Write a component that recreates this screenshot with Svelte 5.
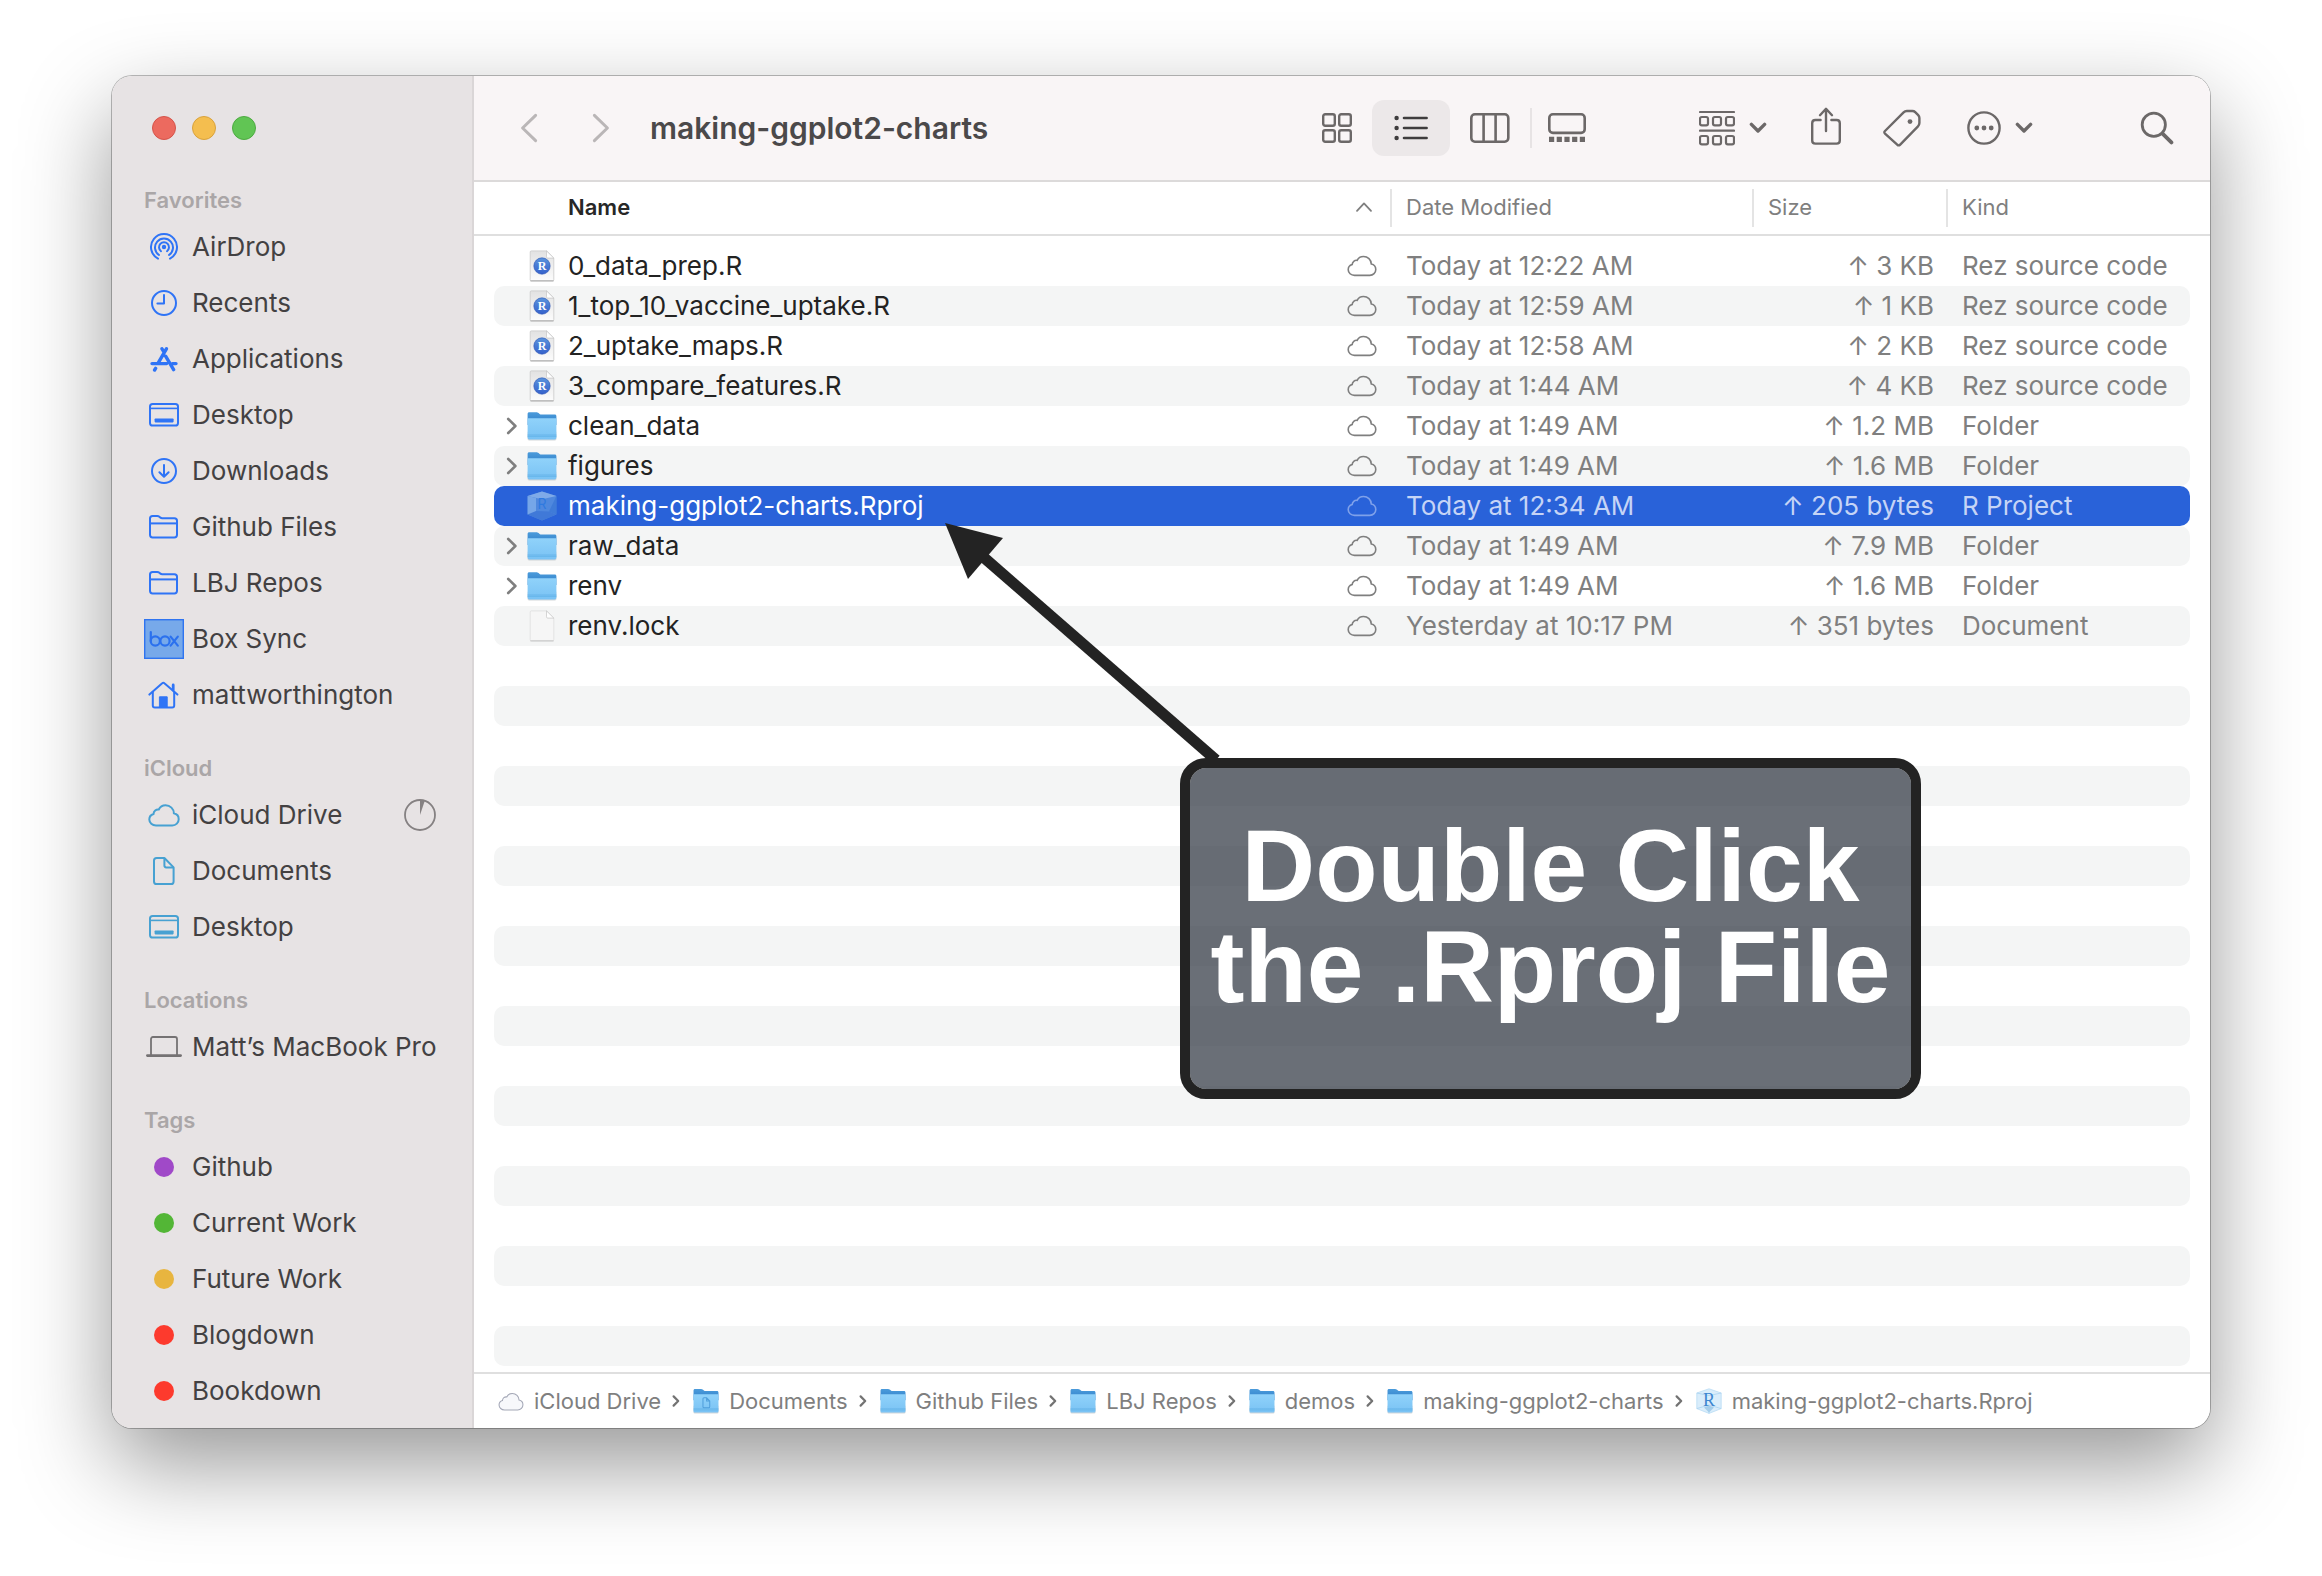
<script>
  const favorites = [
    { icon: 'airdrop', label: 'AirDrop' },
    { icon: 'clock', label: 'Recents' },
    { icon: 'apps', label: 'Applications' },
    { icon: 'desktop', label: 'Desktop' },
    { icon: 'download', label: 'Downloads' },
    { icon: 'folder', label: 'Github Files' },
    { icon: 'folder', label: 'LBJ Repos' },
    { icon: 'box', label: 'Box Sync' },
    { icon: 'home', label: 'mattworthington' }
  ];
  const icloud = [
    { icon: 'cloud', label: 'iCloud Drive', progress: true },
    { icon: 'document', label: 'Documents' },
    { icon: 'desktop', label: 'Desktop' }
  ];
  const locations = [{ icon: 'laptop', label: 'Matt’s MacBook Pro' }];
  const tags = [
    { icon: 'dot', tone: 'purple', label: 'Github' },
    { icon: 'dot', tone: 'green', label: 'Current Work' },
    { icon: 'dot', tone: 'yellow', label: 'Future Work' },
    { icon: 'dot', tone: 'red', label: 'Blogdown' },
    { icon: 'dot', tone: 'red', label: 'Bookdown' }
  ];
  const sections = [
    { title: 'Favorites', tone: 'blue', items: favorites },
    { title: 'iCloud', tone: 'cyan', items: icloud },
    { title: 'Locations', tone: 'gray', items: locations },
    { title: 'Tags', tone: 'gray', items: tags }
  ];

  const files = [
    { icon: 'rfile', name: '0_data_prep.R', date: 'Today at 12:22 AM', size: '3 KB', kind: 'Rez source code' },
    { icon: 'rfile', name: '1_top_10_vaccine_uptake.R', date: 'Today at 12:59 AM', size: '1 KB', kind: 'Rez source code' },
    { icon: 'rfile', name: '2_uptake_maps.R', date: 'Today at 12:58 AM', size: '2 KB', kind: 'Rez source code' },
    { icon: 'rfile', name: '3_compare_features.R', date: 'Today at 1:44 AM', size: '4 KB', kind: 'Rez source code' },
    { icon: 'folder', name: 'clean_data', date: 'Today at 1:49 AM', size: '1.2 MB', kind: 'Folder' },
    { icon: 'folder', name: 'figures', date: 'Today at 1:49 AM', size: '1.6 MB', kind: 'Folder' },
    { icon: 'cube', name: 'making-ggplot2-charts.Rproj', date: 'Today at 12:34 AM', size: '205 bytes', kind: 'R Project', selected: true },
    { icon: 'folder', name: 'raw_data', date: 'Today at 1:49 AM', size: '7.9 MB', kind: 'Folder' },
    { icon: 'folder', name: 'renv', date: 'Today at 1:49 AM', size: '1.6 MB', kind: 'Folder' },
    { icon: 'blank', name: 'renv.lock', date: 'Yesterday at 10:17 PM', size: '351 bytes', kind: 'Document' }
  ];
  const emptyRows = Array.from({ length: 18 }, (_, i) => i);

  const path = [
    { icon: 'cloudfill', label: 'iCloud Drive' },
    { icon: 'docfolder', label: 'Documents' },
    { icon: 'folder', label: 'Github Files' },
    { icon: 'folder', label: 'LBJ Repos' },
    { icon: 'folder', label: 'demos' },
    { icon: 'folder', label: 'making-ggplot2-charts' },
    { icon: 'cubelight', label: 'making-ggplot2-charts.Rproj' }
  ];

  const cloudPath =
    'M8 21.5C4.3 21.5 1.3 18.9 1.3 15.6c0-2.7 1.7-4.9 4.2-5.6.2-3 2.6-4.9 5.3-4.5C12 2.9 14.6 1.3 17.6 1.3c4.6 0 8.2 3.5 8.3 8 2.8.6 4.8 3 4.8 5.9 0 3.5-2.8 6.3-6.4 6.3z';
</script>

{#snippet sideIcon(name, tone)}
  {#if name === 'airdrop'}
    <svg width="30" height="30" viewBox="0 0 30 30" fill="none" stroke="currentColor" stroke-width="2" stroke-linecap="round" aria-hidden="true">
      <circle cx="15" cy="15" r="2.2" fill="currentColor" stroke="none" />
      <path d="M12 19.2a5 5 0 1 1 6 0" />
      <path d="M10 23a9 9 0 1 1 10 0" />
      <path d="M9 26.6a13 13 0 1 1 12 0" />
    </svg>
  {:else if name === 'clock'}
    <svg width="28" height="28" viewBox="0 0 28 28" fill="none" stroke="currentColor" stroke-width="2" stroke-linecap="round" stroke-linejoin="round" aria-hidden="true">
      <circle cx="14" cy="14" r="12" /><path d="M14 6v8.6H7.4" />
    </svg>
  {:else if name === 'apps'}
    <svg width="28" height="26" viewBox="0 0 28 26" fill="none" stroke="currentColor" stroke-width="3.4" stroke-linecap="round" aria-hidden="true">
      <path d="M12 2.8l1.6 2.6M16.4 2.8L8.4 16.6M2 17.6h14.6M22.4 17.6h3.6M5.6 22.4l-1 1.6M15.6 10.2l8 13.4" />
    </svg>
  {:else if name === 'desktop'}
    <svg width="30" height="24" viewBox="0 0 30 24" fill="none" stroke="currentColor" stroke-width="2" aria-hidden="true">
      <rect x="1" y="1" width="28" height="21.5" rx="2.6" /><path d="M1 5.4h28" stroke-width="1.6" />
      <rect x="5.6" y="15.4" width="19" height="4" rx="0.8" fill="currentColor" stroke="none" />
    </svg>
  {:else if name === 'download'}
    <svg width="28" height="28" viewBox="0 0 28 28" fill="none" stroke="currentColor" stroke-width="2" stroke-linecap="round" stroke-linejoin="round" aria-hidden="true">
      <circle cx="14" cy="14" r="12" /><path d="M14 8v11.6M9.4 15.2L14 19.8l4.6-4.6" />
    </svg>
  {:else if name === 'folder'}
    <svg width="30" height="24" viewBox="0 0 30 24" fill="none" stroke="currentColor" stroke-width="2" stroke-linejoin="round" aria-hidden="true">
      <path d="M1 19.8V3.6C1 2 2 1 3.600 1H8.200c.9 0 1.500.2 2.200.8l1 .8c.5.400 1 .6 1.800.6h12.200c1.600 0 2.600 1 2.600 2.600v14c0 1.600-1 2.600-2.600 2.600H3.600C2 22.400 1 21.400 1 19.800z" />
      <path d="M1 8.400h27" />
    </svg>
  {:else if name === 'box'}
    <svg width="40" height="40" viewBox="0 0 40 40" aria-hidden="true">
      <rect x="0.7" y="0.7" width="38.600" height="38.600" fill="#77a9ea" stroke="#2f74f0" stroke-width="1.400" />
      <g fill="none" stroke="#2b71ee" stroke-width="2.200" stroke-linecap="round">
        <path d="M6.800 13v9" /><circle cx="11.300" cy="22" r="4.600" /><circle cx="21" cy="22" r="4.600" />
        <path d="M26.600 17.600l7.200 9M33.800 17.600l-7.200 9" />
      </g>
    </svg>
  {:else if name === 'home'}
    <svg width="32" height="28" viewBox="0 0 32 28" fill="none" stroke="currentColor" stroke-width="2" stroke-linecap="round" stroke-linejoin="round" aria-hidden="true">
      <path d="M1.400 13.600L14.200 2.200a1.600 1.600 0 0 1 2.200 0L29.400 13.600" /><path d="M4.800 11v13.400c0 1.200.8 2 2 2h17.400c1.200 0 2-.8 2-2V11" />
      <path d="M25.200 4v5" stroke-width="2.800" /><path d="M11.800 15.800h7.400v10.400h-7.400z" fill="currentColor" stroke-width="1" />
    </svg>
  {:else if name === 'cloud'}
    <svg width="32" height="23" viewBox="0 0 32 23" fill="none" stroke="currentColor" stroke-width="2" aria-hidden="true"><path d={cloudPath} /></svg>
  {:else if name === 'document'}
    <svg width="22" height="28" viewBox="0 0 22 28" fill="none" stroke="currentColor" stroke-width="2" stroke-linejoin="round" aria-hidden="true">
      <path d="M1 24.400V3.600C1 2 2 1 3.600 1H11.400L20.600 10.400v14c0 1.600-1 2.600-2.600 2.600H3.600C2 27 1 26 1 24.400z" /><path d="M11.400 1v7.600c0 1.200.6 1.800 1.800 1.800h7.400" />
    </svg>
  {:else if name === 'laptop'}
    <svg width="36" height="22" viewBox="0 0 36 22" fill="none" stroke="currentColor" stroke-width="2" stroke-linecap="round" aria-hidden="true">
      <path d="M5 19V3c0-1.200.8-2 2-2h22c1.200 0 2 .8 2 2v16" stroke-width="1.800" /><path d="M1.400 19.600h33.200" stroke-width="2.800" />
    </svg>
  {:else}
    <span class="dot {tone}"></span>
  {/if}
{/snippet}

{#snippet fileIcon(name)}
  {#if name === 'folder' || name === 'docfolder'}
    <svg viewBox="0 0 30 30" aria-hidden="true">
      <defs>
        <linearGradient id="folder-face" x1="0" y1="0" x2="0" y2="1"><stop offset="0" stop-color="#90d2fa" /><stop offset="1" stop-color="#79c2f4" /></linearGradient>
        <linearGradient id="folder-back" x1="0" y1="0" x2="0" y2="1"><stop offset="0" stop-color="#4b9bdb" /><stop offset="1" stop-color="#2f7fc9" /></linearGradient>
      </defs>
      <rect x="0.600" y="20" width="28.800" height="9.400" rx="1.400" fill="#b9bec2" opacity="0.6" />
      <path d="M.6 3c0-1.200.6-1.800 1.800-1.800h6.800c1 0 1.600.2 2.400.9l1 .8c.6.500 1 .7 2 .7h13c1.200 0 1.800.6 1.800 1.800V14H.6z" fill="url(#folder-back)" />
      <path d="M.6 7.200h28.800v19.400c0 1.200-.6 1.800-1.800 1.800H2.400c-1.200 0-1.800-.6-1.800-1.800z" fill="url(#folder-face)" />
      <path d="M.6 24h28.800M.6 25.400h28.800" stroke="#5fb0e6" stroke-width="0.700" />
      {#if name === 'docfolder'}
        <path d="M11.500 21.500v-9c0-.8.4-1.200 1.200-1.200h3l3.600 3.600v6.600c0 .8-.4 1.200-1.200 1.200h-5.400c-.8 0-1.200-.4-1.200-1.200zM15.700 11.300v3.600h3.600" fill="none" stroke="#4f9fdc" stroke-width="1.200" />
      {/if}
    </svg>
  {:else if name === 'rfile' || name === 'blank'}
    <svg viewBox="0 0 30 32" aria-hidden="true">
      <defs>
        <linearGradient id="page-face" x1="0" y1="0" x2="0" y2="1"><stop offset="0" stop-color="#e2e2e2" /><stop offset="1" stop-color="#fcfcfc" /></linearGradient>
        <linearGradient id="r-ball" x1="0" y1="0" x2="0" y2="1"><stop offset="0" stop-color="#5a94dd" /><stop offset="1" stop-color="#3561cb" /></linearGradient>
      </defs>
      <path d="M3.200 29V2c0-.7.400-1.100 1.100-1.100h15.200l7.300 7.200V29.800c0 .7-.4 1.100-1.100 1.100H4.300c-.7 0-1.100-.4-1.100-1.100z" fill={name === 'rfile' ? 'url(#page-face)' : '#f6f6f6'} stroke={name === 'rfile' ? '#c9c9c9' : '#dedede'} stroke-width="0.800" />
      <path d="M3.400 30.900h23.200" stroke={name === 'rfile' ? '#a9a9a9' : '#c4c4c4'} stroke-width="1" />
      <path d="M19.500.9v5.900c0 .9.400 1.300 1.300 1.300h6z" fill="#fff" stroke="#c4c4c4" stroke-width="0.700" />
      {#if name === 'rfile'}
        <circle cx="15" cy="16" r="8.200" fill="url(#r-ball)" stroke="#2c54b4" stroke-width="0.600" />
        <text x="15" y="20" class="ball-letter">R</text>
      {/if}
    </svg>
  {:else if name === 'cube'}
    <svg viewBox="0 0 30 30" aria-hidden="true">
      <path d="M15 0.600L29.400 5v18.600L15 29.600.6 23.600V5z" fill="#4f88de" />
      <path d="M15 .6L29.400 5 15 8.200.6 5z" fill="#7faae8" />
      <path d="M.6 5L9 7v16L.6 23.600z" fill="#76a6e8" />
      <path d="M29.400 5v18.600L22 20.400z" fill="#3f7bd8" />
      <path d="M.6 23.600L9 20l13 .4 7.400 3.200L15 29.600z" fill="#4079d8" />
      <text x="15" y="18" class="cube-letter">R</text>
    </svg>
  {:else if name === 'cubelight'}
    <svg viewBox="0 0 26 26" aria-hidden="true">
      <path d="M13 .8L25.200 5v15.600L13 25.400.8 20.600V5z" fill="#d9edfb" stroke="#b9dcf4" stroke-width="0.800" />
      <path d="M.8 5L13 7.600 25.200 5M.8 20.600L13 17l12.200 3.600M13 17v8.400" fill="none" stroke="#a9d3f1" stroke-width="0.800" />
      <path d="M8 19.400l5 5 5-5-5-1.800z" fill="#a4cdea" />
      <text x="13" y="17.500" class="light-letter">R</text>
    </svg>
  {:else}
    <svg viewBox="0 0 32 28" aria-hidden="true">
      <g transform="translate(0 3)"><path d={cloudPath} fill="#f7f8fb" stroke="#a3a7b6" stroke-width="1.300" /></g>
    </svg>
  {/if}
{/snippet}

{#snippet smallChevron()}
  <svg width="18" height="12" viewBox="0 0 18 12" fill="none" stroke="currentColor" stroke-width="3.400" stroke-linecap="round" stroke-linejoin="round" aria-hidden="true"><path d="M2.400 2.400L9 9l6.600-6.600" /></svg>
{/snippet}

<div class="page">
  <div class="window">
    <aside class="sidebar">
      <div class="lights">
        <button class="light close" aria-label="Close"></button>
        <button class="light minimize" aria-label="Minimize"></button>
        <button class="light zoom" aria-label="Zoom"></button>
      </div>
      <nav aria-label="Sidebar">
        {#each sections as section}
          <h2>{section.title}</h2>
          <ul class={section.tone}>
            {#each section.items as item}
              <li>
                <a href="#top">
                  <span class="side-icon">{@render sideIcon(item.icon, item.tone)}</span>
                  <span>{item.label}</span>
                  {#if item.progress}
                    <svg class="progress" width="32" height="32" viewBox="0 0 32 32" aria-hidden="true">
                      <circle cx="16" cy="16" r="15" fill="none" stroke="#858182" stroke-width="1.800" />
                      <path d="M16 16V1a15 15 0 0 1 4.800.8z" fill="#858182" />
                    </svg>
                  {/if}
                </a>
              </li>
            {/each}
          </ul>
        {/each}
      </nav>
    </aside>

    <main>
      <header class="toolbar">
        <div class="history">
          <button aria-label="Back"><svg width="18" height="30" viewBox="0 0 18 30" aria-hidden="true"><path d="M15.600 2.400L2.600 15l13 12.600" /></svg></button>
          <button aria-label="Forward"><svg width="18" height="30" viewBox="0 0 18 30" aria-hidden="true"><path d="M2.400 2.400L15.400 15l-13 12.600" /></svg></button>
        </div>
        <h1>making-ggplot2-charts</h1>
        <div class="views">
          <button class="icons" aria-label="Icon view">
            <svg width="30" height="30" viewBox="0 0 30 30" fill="none" stroke="currentColor" stroke-width="2.400" aria-hidden="true">
              <rect x="1.200" y="1.200" width="11.600" height="11.600" rx="2" /><rect x="17.200" y="1.200" width="11.600" height="11.600" rx="2" />
              <rect x="1.200" y="17.200" width="11.600" height="11.600" rx="2" /><rect x="17.200" y="17.200" width="11.600" height="11.600" rx="2" />
            </svg>
          </button>
          <button class="list" aria-label="List view" aria-pressed="true">
            <svg width="34" height="26" viewBox="0 0 34 26" fill="none" stroke="currentColor" stroke-width="2.600" stroke-linecap="round" aria-hidden="true">
              <path d="M10 3h22.600M10 13h22.600M10 23h22.600" />
              <g fill="currentColor" stroke="none"><circle cx="2.600" cy="3" r="2.200" /><circle cx="2.600" cy="13" r="2.200" /><circle cx="2.600" cy="23" r="2.200" /></g>
            </svg>
          </button>
          <button class="columns" aria-label="Column view">
            <svg width="40" height="30" viewBox="0 0 40 30" fill="none" stroke="currentColor" stroke-width="2.600" aria-hidden="true">
              <rect x="1.300" y="1.300" width="37" height="27.400" rx="3.600" /><path d="M13.600 1.200v27.600M25.600 1.200v27.600" />
            </svg>
          </button>
          <span class="divider"></span>
          <button class="gallery" aria-label="Gallery view">
            <svg width="38" height="30" viewBox="0 0 38 30" fill="none" stroke="currentColor" stroke-width="2.600" aria-hidden="true">
              <rect x="1.300" y="1.300" width="35.400" height="18.600" rx="3.600" />
              <path d="M1 26.400h36" stroke-width="5.200" stroke-dasharray="5.200 2.500" />
            </svg>
          </button>
        </div>
        <div class="actions">
          <button class="group" aria-label="Group items">
            <svg width="36" height="36" viewBox="0 0 36 36" fill="none" stroke="currentColor" stroke-width="2.200" stroke-linecap="round" aria-hidden="true">
              <path d="M1 2h34M1 20.600h34" />
              <rect x="1" y="7" width="8" height="8.400" rx="1.800" /><rect x="14" y="7" width="8" height="8.400" rx="1.800" /><rect x="27" y="7" width="8" height="8.400" rx="1.800" />
              <rect x="1" y="26" width="8" height="8.400" rx="1.800" /><rect x="14" y="26" width="8" height="8.400" rx="1.800" /><rect x="27" y="26" width="8" height="8.400" rx="1.800" />
            </svg>
            {@render smallChevron()}
          </button>
          <button class="single" aria-label="Share">
            <svg width="30" height="42" viewBox="0 0 30 42" fill="none" stroke="currentColor" stroke-width="2.400" stroke-linecap="round" stroke-linejoin="round" aria-hidden="true">
              <path d="M9.600 13H4.400c-2 0-3.200 1.200-3.200 3.200v17.200c0 2 1.200 3.200 3.200 3.200h21.200c2 0 3.200-1.200 3.200-3.200V16.200c0-2-1.200-3.200-3.200-3.200h-5.200" />
              <path d="M15 24V2.200M9 8.200l6-6.400 6 6.400" />
            </svg>
          </button>
          <button class="single" aria-label="Edit tags">
            <svg width="38" height="38" viewBox="0 0 38 38" fill="none" stroke="currentColor" stroke-width="2.400" stroke-linejoin="round" aria-hidden="true">
              <path d="M2 22L20.600 3.400c1-1 1.800-1.400 3.200-1.400h5.600c1.200 0 2 .3 2.800 1.100l3 3c.8.8 1.200 1.600 1.200 2.800v5.200c0 1.400-.4 2.200-1.400 3.200L17.200 35.600c-1 1-2 1-3 0L2 24.600c-.9-.9-.9-1.700 0-2.600z" />
              <circle cx="27" cy="12.600" r="2.400" fill="currentColor" stroke="none" />
            </svg>
          </button>
          <button class="more" aria-label="More actions">
            <svg width="34" height="34" viewBox="0 0 34 34" fill="none" stroke="currentColor" stroke-width="2.400" aria-hidden="true">
              <circle cx="17" cy="17" r="15.600" />
              <g fill="currentColor" stroke="none"><circle cx="9.800" cy="17" r="2.400" /><circle cx="17" cy="17" r="2.400" /><circle cx="24.200" cy="17" r="2.400" /></g>
            </svg>
            {@render smallChevron()}
          </button>
        </div>
        <button class="search" aria-label="Search">
          <svg width="34" height="34" viewBox="0 0 34 34" fill="none" stroke="currentColor" stroke-width="2.800" stroke-linecap="round" aria-hidden="true">
            <circle cx="13.800" cy="13.800" r="11.600" /><path d="M22.800 22.800l8.600 8.600" stroke-width="3.800" />
          </svg>
        </button>
      </header>

      <table>
        <colgroup><col class="c-edge" /><col class="c-name" /><col class="c-date" /><col class="c-size" /><col class="c-kind" /><col class="c-edge" /></colgroup>
        <thead>
          <tr>
            <th class="name" scope="col" aria-sort="ascending">
              <button>Name
                <svg width="18" height="12" viewBox="0 0 18 12" fill="none" stroke="#7f7f7f" stroke-width="1.800" stroke-linecap="round" stroke-linejoin="round" aria-hidden="true"><path d="M2 9.800L9 2.400l7 7.400" /></svg>
              </button>
            </th>
            <th scope="col"><button>Date Modified</button></th>
            <th scope="col"><button>Size</button></th>
            <th scope="col"><button>Kind</button></th>
          </tr>
        </thead>
        <tbody>
          {#each files as file}
            <tr class:selected={file.selected}>
              <td class="name">
                <div class="file">
                  {#if file.icon === 'folder'}
                    <button class="disclose" aria-label={'Expand ' + file.name}>
                      <svg width="12" height="18" viewBox="0 0 12 18" fill="none" stroke="#7f7f7f" stroke-width="2.600" stroke-linecap="round" stroke-linejoin="round" aria-hidden="true"><path d="M2.200 2L9.400 9l-7.200 7" /></svg>
                    </button>
                  {:else}
                    <span class="disclose"></span>
                  {/if}
                  <span class="file-icon">{@render fileIcon(file.icon)}</span>
                  <span class="file-name">{file.name}</span>
                  <svg class="cloud" width="30" height="22" viewBox="0 0 32 23" fill="none" stroke="currentColor" stroke-width="1.700" aria-hidden="true"><path d={cloudPath} /></svg>
                </div>
              </td>
              <td>{file.date}</td>
              <td class="size">↑ {file.size}</td>
              <td>{file.kind}</td>
            </tr>
          {/each}
          {#each emptyRows as row (row)}
            <tr><td></td><td></td><td></td><td></td></tr>
          {/each}
        </tbody>
      </table>

      <footer class="pathbar">
        {#each path as step, i}
          {#if i > 0}
            <svg class="sep" width="8" height="14" viewBox="0 0 8 14" fill="none" stroke="#737373" stroke-width="2.200" stroke-linecap="round" stroke-linejoin="round" aria-hidden="true"><path d="M1.600 2.400L6.200 7l-4.600 4.600" /></svg>
          {/if}
          <a href="#top"><span class="step-icon">{@render fileIcon(step.icon)}</span>{step.label}</a>
        {/each}
      </footer>

      <svg class="arrow" width="290" height="250" viewBox="0 0 290 250" aria-hidden="true">
        <path d="M36 32L271 237" stroke="#232323" stroke-width="11" />
        <path d="M0 0L58 15 23 56z" fill="#232323" />
      </svg>
      <div class="callout">Double Click<br />the .Rproj File</div>
    </main>
  </div>
</div>

<style>
  :global(body) {
    background: #fff;
  }
  .page {
    padding: 76px 112px 148px;
    font-family: Inter, 'Liberation Sans', sans-serif;
    font-size: 26px;
    line-height: 40px;
    color: #232323;
  }
  .window {
    display: flex;
    border-radius: 20px;
    box-shadow:
      0 0 0 1px rgba(0, 0, 0, 0.26),
      0 36px 90px rgba(0, 0, 0, 0.41);
  }
  button {
    display: flex;
    align-items: center;
    padding: 0;
    border: 0;
    background: none;
    font: inherit;
    color: inherit;
  }
  a {
    color: inherit;
    text-decoration: none;
  }
  svg {
    display: block;
    flex: none;
  }

  .sidebar {
    box-sizing: border-box;
    flex: none;
    width: 362px;
    padding: 40px 28px 9px 32px;
    border-right: 2px solid #dad6d7;
    border-radius: 20px 0 0 20px;
    background: #e7e3e4;
    color: #434142;
  }
  .lights {
    display: flex;
    gap: 16px;
    padding: 0 8px 15px;
  }
  .light {
    width: 24px;
    height: 24px;
    border: 1px solid;
    border-radius: 50%;
  }
  .close {
    border-color: #d5544a;
    background: #ec6a5f;
  }
  .minimize {
    border-color: #d9a23c;
    background: #f4be4f;
  }
  .zoom {
    border-color: #4dab41;
    background: #61c554;
  }
  h2 {
    margin: 0;
    padding: 28px 0 2px;
    font-size: 22px;
    font-weight: 600;
    line-height: 34px;
    color: #aaa6a7;
  }
  ul {
    margin: 0;
    padding: 0;
    list-style: none;
  }
  li a {
    display: flex;
    align-items: center;
    gap: 8px;
    height: 56px;
    white-space: nowrap;
  }
  .side-icon {
    display: flex;
    flex: none;
    justify-content: center;
    width: 40px;
  }
  .blue .side-icon {
    color: #2f74f6;
  }
  .cyan .side-icon {
    color: #47a1d2;
  }
  .gray .side-icon {
    color: #757273;
  }
  .progress {
    margin-left: auto;
    margin-right: 8px;
  }
  .dot {
    width: 20px;
    height: 20px;
    border-radius: 50%;
  }
  .purple {
    background: #a049c8;
  }
  .green {
    background: #53b636;
  }
  .yellow {
    background: #e8b53f;
  }
  .red {
    background: #fd3a2d;
  }

  main {
    position: relative;
    flex: 1;
    min-width: 0;
    border-radius: 0 20px 20px 0;
    background: #fff;
  }
  .toolbar {
    display: flex;
    align-items: center;
    height: 104px;
    padding: 0 36px 0 46px;
    border-bottom: 2px solid #dcdada;
    border-radius: 0 20px 0 0;
    background: #f9f5f6;
    color: #6c6868;
  }
  .history {
    display: flex;
    gap: 54px;
  }
  .history path {
    fill: none;
    stroke: #bab6b7;
    stroke-width: 3;
    stroke-linecap: round;
    stroke-linejoin: round;
  }
  h1 {
    margin: 0 auto 0 40px;
    font-size: 30px;
    font-weight: 600;
    line-height: 40px;
    color: #4b494a;
    white-space: nowrap;
  }
  .views {
    display: flex;
    align-items: center;
  }
  .views button {
    justify-content: center;
    width: 70px;
    height: 56px;
    border-radius: 12px;
  }
  .views .list {
    width: 78px;
    background: #ece8e9;
    color: #3f3d3e;
  }
  .views .columns {
    width: 80px;
  }
  .divider {
    width: 2px;
    height: 40px;
    background: #e7e3e4;
  }
  .actions {
    display: flex;
    align-items: center;
    gap: 42px;
    margin: 0 107px 0 97px;
  }
  .group,
  .more {
    gap: 14px;
  }
  .more {
    justify-content: flex-end;
    width: 72px;
  }
  .single {
    justify-content: center;
    width: 34px;
  }

  table {
    width: 100%;
    border-collapse: separate;
    border-spacing: 0;
    table-layout: fixed;
    color: #7f7f7f;
  }
  .c-edge {
    width: 20px;
  }
  .c-date {
    width: 362px;
  }
  .c-size {
    width: 194px;
  }
  .c-kind {
    width: 244px;
  }
  tr::before,
  tr::after {
    content: '';
    display: table-cell;
  }
  th {
    height: 52px;
    padding: 0;
    border-bottom: 2px solid #dfdfdf;
    text-align: left;
    font-size: 22px;
    font-weight: 400;
    line-height: 36px;
  }
  thead tr::before,
  thead tr::after {
    border-bottom: 2px solid #dfdfdf;
  }
  th button {
    box-sizing: border-box;
    width: 100%;
    padding: 0 0 2px 14px;
    border-left: 2px solid #e4e4e4;
  }
  th.name button {
    justify-content: space-between;
    padding: 0 17px 2px 74px;
    border: 0;
    font-weight: 600;
    color: #272727;
  }
  tbody::before {
    content: '';
    display: table-row;
    height: 10px;
  }
  td {
    height: 40px;
    padding: 0 0 0 16px;
    white-space: nowrap;
  }
  td.name {
    padding: 0 13px 0 12px;
  }
  td.size {
    padding-right: 12px;
    text-align: right;
  }
  tbody tr:nth-child(even) td {
    background: #f4f5f5;
  }
  td:first-child {
    border-radius: 10px 0 0 10px;
  }
  td:last-child {
    border-radius: 0 10px 10px 0;
  }
  tbody tr.selected td {
    background: #2962d9;
    color: #c5d4f6;
  }
  .file {
    display: flex;
    align-items: center;
  }
  .disclose {
    width: 21px;
  }
  .file-icon {
    width: 30px;
    margin-right: 11px;
  }
  .file-name {
    flex: 1;
    color: #232323;
  }
  .selected .file-name {
    color: #fff;
  }
  .selected .cloud {
    color: #7fa1ea;
  }
  .ball-letter,
  .cube-letter,
  .light-letter {
    font-family: 'Liberation Serif', serif;
    font-weight: 700;
    text-anchor: middle;
  }
  .ball-letter {
    font-size: 12px;
    fill: #fff;
  }
  .cube-letter {
    font-family: Inter, sans-serif;
    font-size: 14px;
    font-weight: 400;
    fill: #2f7ae0;
  }
  .light-letter {
    font-size: 18px;
    font-weight: 400;
    fill: #3d86cf;
  }

  .pathbar {
    display: flex;
    align-items: center;
    height: 54px;
    margin-top: 6px;
    padding: 0 24px;
    border-top: 2px solid #dfdfdf;
    font-size: 22px;
    line-height: 34px;
    color: #7f7f7f;
    white-space: nowrap;
  }
  .pathbar a {
    display: flex;
    align-items: center;
    gap: 10px;
  }
  .step-icon {
    width: 26px;
  }
  .sep {
    margin: 0 13px 0 11px;
  }

  .arrow {
    position: absolute;
    top: 447px;
    left: 471px;
  }
  .callout {
    position: absolute;
    top: 682px;
    left: 706px;
    box-sizing: border-box;
    width: 741px;
    height: 341px;
    padding-top: 48px;
    border: 10px solid #232323;
    border-radius: 26px;
    background: rgba(49, 56, 66, 0.72);
    background-clip: padding-box;
    font-family: 'Liberation Sans', sans-serif;
    font-size: 102px;
    font-weight: 700;
    line-height: 101px;
    text-align: center;
    color: #fff;
    white-space: nowrap;
  }
</style>
